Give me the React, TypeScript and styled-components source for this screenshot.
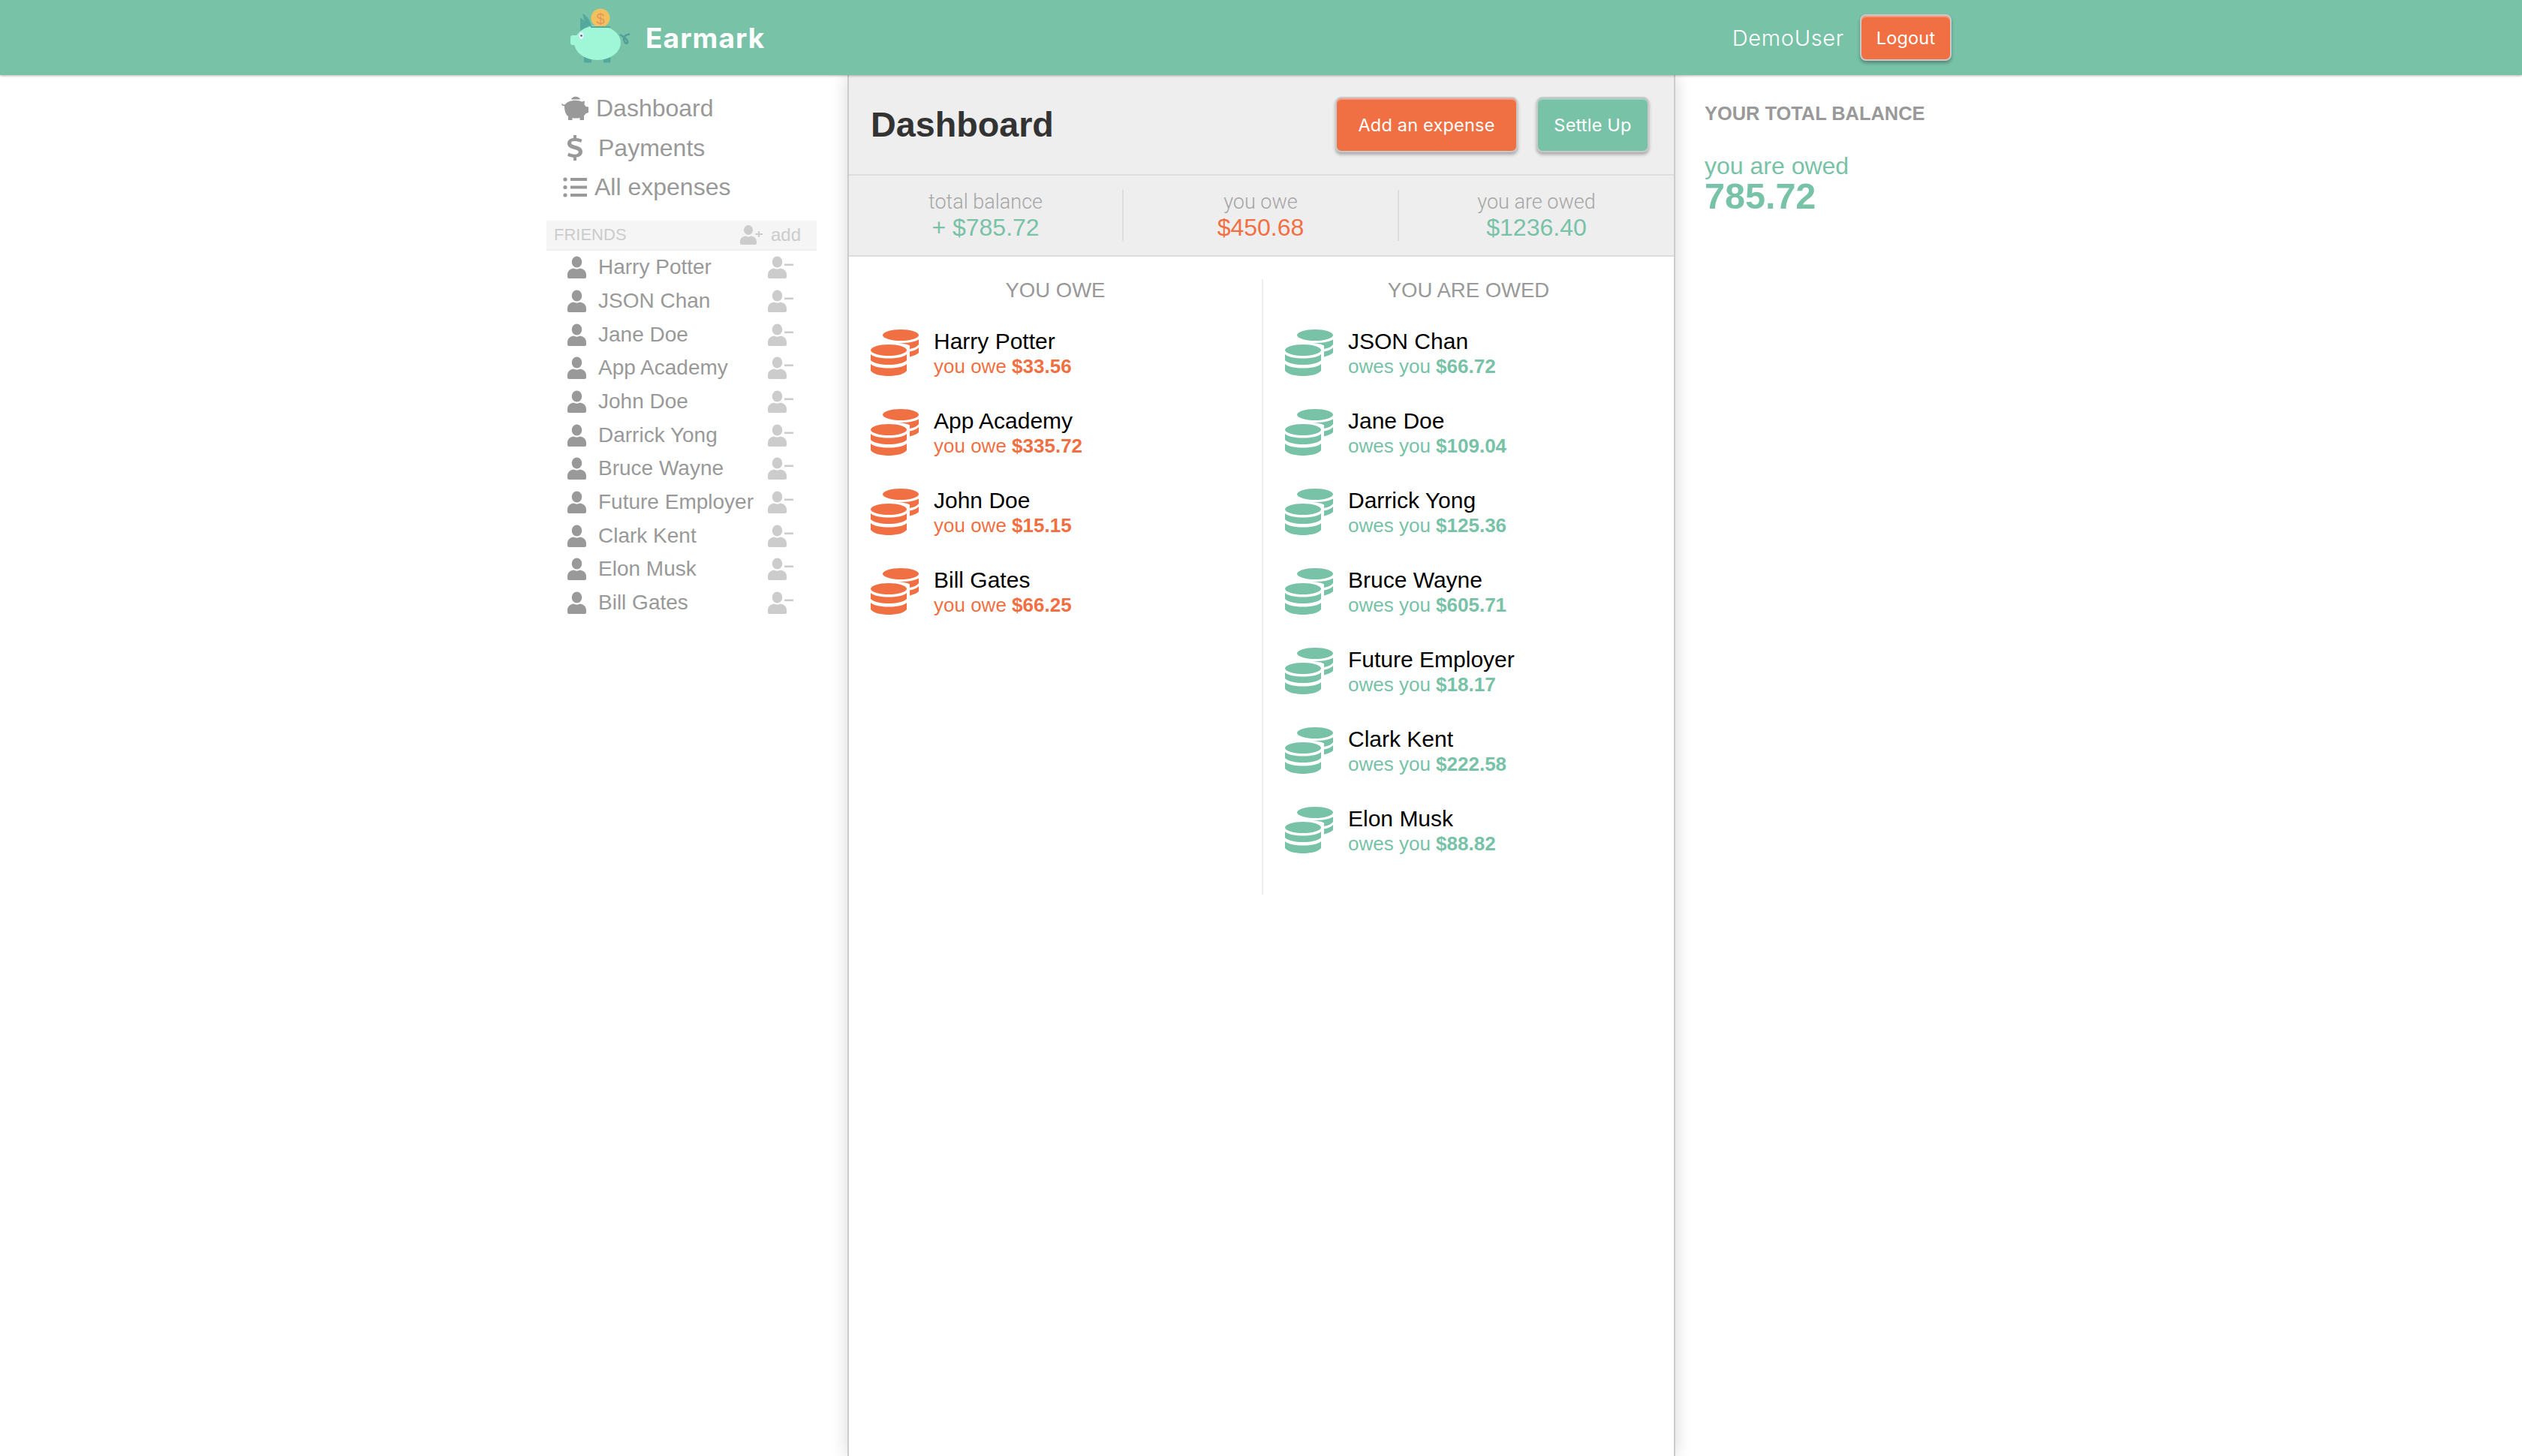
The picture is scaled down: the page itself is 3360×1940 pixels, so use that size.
import React from "react";
import styled, { createGlobalStyle } from "styled-components";

const GREEN = "#78c2a8";
const ORANGE = "#f17043";
const SANS = `"Liberation Sans", Arial, sans-serif`;
const BRAND = `Inter, "Open Sans", sans-serif`;

const Global = createGlobalStyle`
  html, body { margin: 0; padding: 0; background: #fff; height: 1940px; overflow: hidden; }
  body { font-family: ${SANS}; }
  * { box-sizing: border-box; }
`;

const Page = styled.div`
  height: 1940px;
  overflow: hidden;
  display: flex;
  flex-direction: column;
`;
const Header = styled.header`
  height: 100px;
  flex: none;
  background: ${GREEN};
  display: flex;
  align-items: center;
  padding-left: 740px;
  position: relative;
  z-index: 2;
  box-shadow: 0 1px 3px rgba(0, 0, 0, 0.3);
`;
const Brand = styled.div`
  font: 700 37px ${BRAND};
  color: #fff;
  margin-left: 10px;
  letter-spacing: 1.1px;
  flex: 1;
`;
const UserName = styled.div`
  font: 300 29px ${BRAND};
  color: #fff;
  margin-right: 21px;
  letter-spacing: 0.7px;
`;
const Btn = styled.button<{ $bg: string; $w: number; $h: number }>`
  width: ${(p) => p.$w}px;
  height: ${(p) => p.$h}px;
  background: ${(p) => p.$bg};
  color: #fff;
  font: 400 23.5px ${BRAND};
  letter-spacing: 0.2px;
  border: 2px solid #c9c9c9;
  border-radius: 8px;
  padding: 0;
  box-shadow: 0 3px 4px rgba(0, 0, 0, 0.3), inset 0 2px 0 rgba(255, 255, 255, 0.3);
`;
const LogoutWrap = styled.div`
  margin-right: 760px;
`;

const Body = styled.div`
  flex: 1;
  display: flex;
  padding-left: 728px;
`;
const Side = styled.aside`
  width: 360px;
  flex: none;
  padding-top: 18.4px;
`;
const NavItem = styled.div`
  height: 52.5px;
  display: flex;
  align-items: center;
  font-size: 32px;
  color: #999;
`;
const NavIcon = styled.svg<{ $left: number; $w: number; $gap: number }>`
  width: ${(p) => p.$w}px;
  height: 36px;
  margin-left: ${(p) => p.$left}px;
  margin-right: ${(p) => p.$gap}px;
  fill: #999;
  flex: none;
`;
const FriendsHead = styled.div`
  margin-top: 18px;
  height: 40px;
  background: #f5f5f5;
  border-bottom: 2px solid #eee;
  display: flex;
  align-items: center;
  padding: 0 21px 0 10px;
  font-size: 24px;
  color: #ccc;
`;
const FriendsLabel = styled.span`
  flex: 1;
  font-size: 22px;
`;
const FriendRow = styled.div`
  height: 44.7px;
  display: flex;
  align-items: center;
  font-size: 28px;
  color: #999;
  padding-left: 28px;
`;
const FriendName = styled.span`
  flex: 1;
  margin-left: 16px;
`;
const PersonIcon = styled.svg<{ $c: string; $w: number; $r?: number }>`
  width: ${(p) => p.$w}px;
  height: 30px;
  fill: ${(p) => p.$c};
  flex: none;
  margin-right: ${(p) => p.$r ?? 0}px;
`;

const Main = styled.main`
  width: 1103px;
  flex: none;
  margin-left: 41px;
  border-left: 2px solid #ccc;
  border-right: 2px solid #ccc;
  box-shadow: 0 0 22px rgba(0, 0, 0, 0.16);
`;
const TopBar = styled.div`
  height: 134px;
  background: #eee;
  border-bottom: 2px solid #ddd;
  display: flex;
  align-items: center;
  padding: 0 33px 0 29px;
  gap: 25px;
`;
const Title = styled.h1`
  flex: 1;
  margin: 0;
  font: 700 46.7px ${SANS};
  color: #333;
`;
const Stats = styled.div`
  height: 108px;
  background: #eee;
  border-bottom: 2px solid #ddd;
  display: grid;
  grid-template-columns: 366px 367px 1fr;
  padding-top: 19px;
`;
const Stat = styled.div<{ $line?: boolean }>`
  height: 68px;
  text-align: center;
  border-right: ${(p) => (p.$line ? "2px solid #ddd" : "none")};
`;
const StatLabel = styled.div`
  font: 300 27px/32px Roboto, ${SANS};
  color: #a6a6a6;
`;
const StatValue = styled.div<{ $c: string }>`
  font: 400 32px/36px ${SANS};
  color: ${(p) => p.$c};
`;
const Columns = styled.div`
  display: grid;
  grid-template-columns: 552px 1fr;
  padding-top: 30px;
`;
const Col = styled.section<{ $line?: boolean }>`
  height: 820px;
  border-right: ${(p) => (p.$line ? "2px solid #eee" : "none")};
  padding-left: 29px;
`;
const ColTitle = styled.h2`
  margin: 0 0 22px -29px;
  font: 400 27.5px/30px ${SANS};
  color: #999;
  text-align: center;
`;
const Row = styled.div`
  height: 106px;
  display: flex;
  align-items: flex-start;
  padding-top: 15px;
`;
const Coin = styled.svg<{ $c: string }>`
  width: 65px;
  height: 64px;
  fill: ${(p) => p.$c};
  flex: none;
  margin: 0 19px 0 0;
`;
const RowText = styled.div`
  margin-top: -1px;
`;
const Name = styled.div`
  font: 400 30px/34px ${SANS};
  color: #000;
`;
const Sub = styled.div<{ $c: string }>`
  font: 400 26px/32px ${SANS};
  color: ${(p) => p.$c};
`;
const Amount = styled.b`
  font-weight: 700;
`;
const Right = styled.aside`
  padding: 36px 0 0 39px;
`;
const RightTitle = styled.div`
  font: 700 25.4px/30px ${SANS};
  color: #999;
  margin-bottom: 38px;
`;
const RightLabel = styled.div`
  font: 400 32px/34px ${SANS};
  color: ${GREEN};
`;
const RightValue = styled.div`
  font: 700 48.5px/46px ${SANS};
  color: ${GREEN};
`;

const Logo = () => (
  <svg width="110" height="100" viewBox="0 0 110 100" style={{ flex: "none" }}>
    <path d="M33 42 V23 L41 30 L44 36 Z" fill="#55a99c" />
    <path d="M36 18 C43 22 47 28 48 36 L40 33 Z" fill="#55a99c" />
    <rect x="38" y="74" width="10" height="9.5" fill="#55a99c" />
    <rect x="64" y="74" width="9.5" height="9.5" fill="#55a99c" />
    <rect x="20" y="47" width="10" height="13" rx="3" fill="#9ff7d8" />
    <ellipse cx="56" cy="57" rx="31" ry="23" fill="#9ff7d8" />
    <ellipse cx="34.5" cy="47.5" rx="2.8" ry="4.5" fill="#eef" />
    <circle cx="34.5" cy="47.5" r="1.3" fill="#456" />
    <path d="M86 46 C92 50 97 53 96 57 C94 60 90 54 91 50 C92 47 96 46 99 45.5" fill="none" stroke="#4f9f96" strokeWidth="2.4" />
    <circle cx="60" cy="24" r="12.5" fill="#f2c15e" />
    <text x="60" y="31.5" textAnchor="middle" fontFamily={SANS} fontSize="20" fill="#e2975a">$</text>
    <rect x="47" y="35" width="26" height="2" fill="#55a99c" />
  </svg>
);

const PigIcon = () => (
  <NavIcon $left={20} $w={36} $gap={10} viewBox="0 0 36 36">
    <path d="M13 5.5 C14 0.5 24 0.5 25 5.5 Z" />
    <path d="M4 14 C1.5 15 0 13 0.5 11 L2 11.5 C2 13 3 12.8 5 12 C8 8 12 6.8 19 6.8 C22 6.8 25 7.5 27 8.5 L31 7.5 L30.5 12 L32.5 15 L36 15.5 V23 L33 24 L30 27 V33 H24.5 V30 C21 30.8 17 30.8 14.5 30 V33 H9 V28 C5.5 25.5 4 21 4 14 Z" />
  </NavIcon>
);
const DollarIcon = () => (
  <NavIcon $left={27} $w={22} $gap={20} viewBox="0 0 22 36">
    <path d="M9 1 H13 V5 C16 5.3 19 6 20.5 7 L19 11 C16 9.6 13 9 10.5 9 C7.5 9 6 10 6 11.6 C6 13.4 8 14 11.5 15 C17 16.4 21 18 21 23.3 C21 27.5 18 30 13 30.6 V35 H9 V30.8 C6 30.6 3 29.8 1 28.5 L2.6 24.6 C5 26 8 26.8 10.8 26.8 C14 26.8 15.8 25.6 15.8 23.6 C15.8 21.6 14 21 10.4 20 C5 18.5 1 17 1 12 C1 8.3 4 5.7 9 5 Z" />
  </NavIcon>
);
const ListIcon = () => (
  <NavIcon $left={22} $w={32} $gap={10} viewBox="0 0 32 36">
    <circle cx="3" cy="7" r="2.6" />
    <circle cx="3" cy="17.5" r="2.6" />
    <circle cx="3" cy="28" r="2.6" />
    <rect x="10" y="5" width="22" height="4" />
    <rect x="10" y="15.5" width="22" height="4" />
    <rect x="10" y="26" width="22" height="4" />
  </NavIcon>
);

const personPath = (
  <>
    <ellipse cx="12.5" cy="8" rx="6.8" ry="7.5" />
    <path d="M0 25 C0 19 5 17 8.5 16.5 C10.5 18 14.5 18 16.5 16.5 C20 17 25 19 25 25 V28 C25 29 24 30 23 30 H2 C1 30 0 29 0 28 Z" />
  </>
);
const Person = () => (
  <PersonIcon $c="#999" $w={25} viewBox="0 0 25 30">
    {personPath}
  </PersonIcon>
);
const PersonMinus = () => (
  <PersonIcon $c="#ccc" $w={34} $r={31} viewBox="0 0 34 30">
    <g>{personPath}</g>
    <rect x="22" y="10.5" width="12" height="2.6" />
  </PersonIcon>
);
const PersonPlus = () => (
  <PersonIcon $c="#ccc" $w={30} $r={11} viewBox="0 0 30 26">
    <ellipse cx="11" cy="6.5" rx="6" ry="6.5" />
    <path d="M0 22 C0 17 4 15 7.5 14.5 C9.5 16 12.5 16 14.5 14.5 C18 15 22 17 22 22 V24 C22 25 21 26 20 26 H2 C1 26 0 25 0 24 Z" />
    <path d="M24 8 H26 V11 H30 V13 H26 V16 H24 V13 H20.5 V11 H24 Z" />
  </PersonIcon>
);

const Coins = ({ c }: { c: string }) => (
  <Coin $c={c} viewBox="0 0 65 64">
    <ellipse cx="40" cy="7.5" rx="24" ry="7.5" />
    <path d="M36 18 C46 18.5 58 17 64 13.5 V20 C62 23 58 25 52 26 V21.5 C50 20 44 18.5 36 18 Z" />
    <path d="M52 29.5 C58 28.5 62 26.5 64 24 V31 C62 33 58 35 52 36.5 Z" />
    <ellipse cx="24" cy="27.5" rx="24" ry="7.5" />
    <path d="M0 33 C4 37 14 38.5 24 38.5 C34 38.5 44 37 48 33 V41 C44 45 34 47 24 47 C14 47 4 45 0 41 Z" />
    <path d="M0 46 C4 50 14 51.5 24 51.5 C34 51.5 44 50 48 46 V55 C44 60 34 62 24 62 C14 62 4 60 0 55 Z" />
  </Coin>
);

const friends = [
  "Harry Potter", "JSON Chan", "Jane Doe", "App Academy", "John Doe", "Darrick Yong",
  "Bruce Wayne", "Future Employer", "Clark Kent", "Elon Musk", "Bill Gates",
];
const owe = [
  ["Harry Potter", "$33.56"], ["App Academy", "$335.72"], ["John Doe", "$15.15"], ["Bill Gates", "$66.25"],
];
const owed = [
  ["JSON Chan", "$66.72"], ["Jane Doe", "$109.04"], ["Darrick Yong", "$125.36"], ["Bruce Wayne", "$605.71"],
  ["Future Employer", "$18.17"], ["Clark Kent", "$222.58"], ["Elon Musk", "$88.82"],
];

export default function App() {
  return (
    <Page>
      <Global />
      <Header>
        <Logo />
        <Brand>Earmark</Brand>
        <UserName>DemoUser</UserName>
        <LogoutWrap>
          <Btn $bg={ORANGE} $w={122} $h={62}>Logout</Btn>
        </LogoutWrap>
      </Header>
      <Body>
        <Side>
          <NavItem><PigIcon />Dashboard</NavItem>
          <NavItem><DollarIcon />Payments</NavItem>
          <NavItem><ListIcon />All expenses</NavItem>
          <FriendsHead>
            <FriendsLabel>FRIENDS</FriendsLabel>
            <PersonPlus />add
          </FriendsHead>
          {friends.map((f) => (
            <FriendRow key={f}>
              <Person />
              <FriendName>{f}</FriendName>
              <PersonMinus />
            </FriendRow>
          ))}
        </Side>
        <Main>
          <TopBar>
            <Title>Dashboard</Title>
            <Btn $bg={ORANGE} $w={243} $h={74}>Add an expense</Btn>
            <Btn $bg={GREEN} $w={150} $h={74}>Settle Up</Btn>
          </TopBar>
          <Stats>
            <Stat $line>
              <StatLabel>total balance</StatLabel>
              <StatValue $c={GREEN}>+ $785.72</StatValue>
            </Stat>
            <Stat $line>
              <StatLabel>you owe</StatLabel>
              <StatValue $c={ORANGE}>$450.68</StatValue>
            </Stat>
            <Stat>
              <StatLabel>you are owed</StatLabel>
              <StatValue $c={GREEN}>$1236.40</StatValue>
            </Stat>
          </Stats>
          <Columns>
            <Col $line>
              <ColTitle>YOU OWE</ColTitle>
              {owe.map(([n, a]) => (
                <Row key={n}>
                  <Coins c={ORANGE} />
                  <RowText>
                    <Name>{n}</Name>
                    <Sub $c={ORANGE}>you owe <Amount>{a}</Amount></Sub>
                  </RowText>
                </Row>
              ))}
            </Col>
            <Col>
              <ColTitle>YOU ARE OWED</ColTitle>
              {owed.map(([n, a]) => (
                <Row key={n}>
                  <Coins c={GREEN} />
                  <RowText>
                    <Name>{n}</Name>
                    <Sub $c={GREEN}>owes you <Amount>{a}</Amount></Sub>
                  </RowText>
                </Row>
              ))}
            </Col>
          </Columns>
        </Main>
        <Right>
          <RightTitle>YOUR TOTAL BALANCE</RightTitle>
          <RightLabel>you are owed</RightLabel>
          <RightValue>785.72</RightValue>
        </Right>
      </Body>
    </Page>
  );
}
